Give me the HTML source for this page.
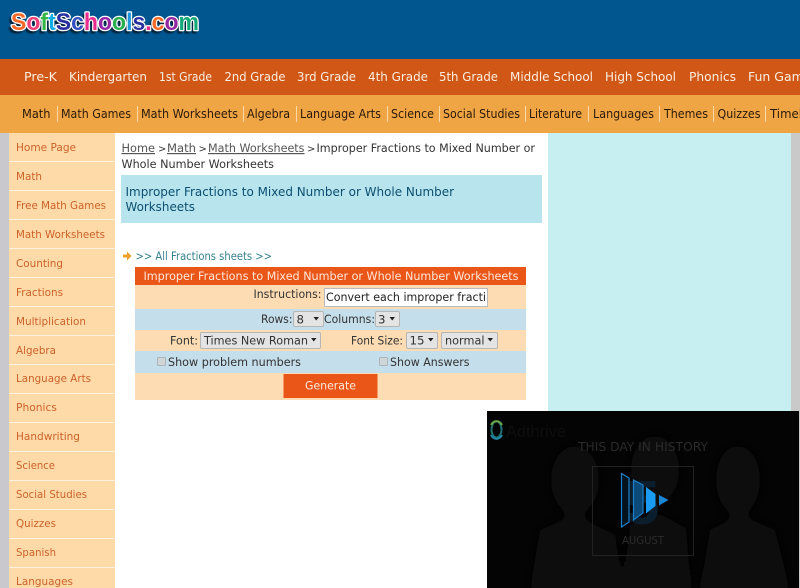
<!DOCTYPE html>
<html><head><meta charset="utf-8"><style>
html,body{margin:0;padding:0;width:800px;height:588px;overflow:hidden;background:#fff}
svg{display:block;font-family:"DejaVu Sans","Liberation Sans",sans-serif}
</style></head><body>
<svg width="800" height="588" viewBox="0 0 800 588" xmlns="http://www.w3.org/2000/svg">
<defs>
<filter id="s" x="-10%" y="-30%" width="120%" height="160%"><feGaussianBlur stdDeviation="0.8"/></filter>
<filter id="h" x="-10%" y="-30%" width="120%" height="160%"><feGaussianBlur stdDeviation="0.35"/></filter>
<filter id="p" x="-30%" y="-30%" width="160%" height="160%"><feGaussianBlur stdDeviation="7"/></filter>
</defs>
<rect width="800" height="59" fill="#01568f"/>
<rect y="59" width="800" height="36" fill="#d05716"/>
<rect y="95" width="800" height="38" fill="#f0a545"/>
<rect y="133" width="9" height="455" fill="#c9c9cd"/>
<rect x="9" y="133" width="106" height="455" fill="#fedaa9"/>
<rect x="548" y="133" width="243" height="455" fill="#c7eff1"/>
<rect x="791" y="133" width="9" height="455" fill="#c9c9c9"/>

<!-- logo -->
<g font-family="Liberation Sans" font-size="24" font-weight="bold">
<text x="9" y="32.500" textLength="188" lengthAdjust="spacingAndGlyphs" fill="#04233a" stroke="#04233a" stroke-width="2" filter="url(#s)">SoftSchools.com</text>
<text x="11" y="30" textLength="188" lengthAdjust="spacingAndGlyphs" fill="#fff" stroke="#fff" stroke-width="2.600" stroke-linejoin="round" filter="url(#h)">SoftSchools.com</text>
<text x="11" y="30" textLength="188" lengthAdjust="spacingAndGlyphs"><tspan fill="#f5692a">S</tspan><tspan fill="#ec3f7c">o</tspan><tspan fill="#36b548">f</tspan><tspan fill="#14aee6">t</tspan><tspan fill="#2b30a0">S</tspan><tspan fill="#3450c0">c</tspan><tspan fill="#ea2c8e">h</tspan><tspan fill="#9426a6">o</tspan><tspan fill="#28b04e">o</tspan><tspan fill="#1f96dc">l</tspan><tspan fill="#2b30a0">s</tspan><tspan fill="#ea2c8e">.</tspan><tspan fill="#f46a26">c</tspan><tspan fill="#9426a0">o</tspan><tspan fill="#16a878">m</tspan></text>
</g>

<!-- nav 1 -->
<g fill="#fbeee0" font-size="12.500">
<text x="24" y="81" textLength="33" lengthAdjust="spacingAndGlyphs">Pre-K</text>
<text x="69" y="81" textLength="78" lengthAdjust="spacingAndGlyphs">Kindergarten</text>
<text x="159" y="81" textLength="53" lengthAdjust="spacingAndGlyphs">1st Grade</text>
<text x="224.500" y="81" textLength="61" lengthAdjust="spacingAndGlyphs">2nd Grade</text>
<text x="297" y="81" textLength="59" lengthAdjust="spacingAndGlyphs">3rd Grade</text>
<text x="368" y="81" textLength="60" lengthAdjust="spacingAndGlyphs">4th Grade</text>
<text x="439" y="81" textLength="59" lengthAdjust="spacingAndGlyphs">5th Grade</text>
<text x="510" y="81" textLength="83" lengthAdjust="spacingAndGlyphs">Middle School</text>
<text x="605" y="81" textLength="71" lengthAdjust="spacingAndGlyphs">High School</text>
<text x="689" y="81" textLength="47" lengthAdjust="spacingAndGlyphs">Phonics</text>
<text x="748" y="81" textLength="70" lengthAdjust="spacingAndGlyphs">Fun Games</text>
</g>

<!-- nav 2 -->
<g fill="#2a1a08" font-size="12">
<text x="22" y="118" textLength="28.500" lengthAdjust="spacingAndGlyphs">Math</text>
<text x="61" y="118" textLength="70" lengthAdjust="spacingAndGlyphs">Math Games</text>
<text x="141" y="118" textLength="97" lengthAdjust="spacingAndGlyphs">Math Worksheets</text>
<text x="247" y="118" textLength="43" lengthAdjust="spacingAndGlyphs">Algebra</text>
<text x="300" y="118" textLength="81" lengthAdjust="spacingAndGlyphs">Language Arts</text>
<text x="391" y="118" textLength="43" lengthAdjust="spacingAndGlyphs">Science</text>
<text x="443" y="118" textLength="77" lengthAdjust="spacingAndGlyphs">Social Studies</text>
<text x="529" y="118" textLength="53" lengthAdjust="spacingAndGlyphs">Literature</text>
<text x="593" y="118" textLength="61" lengthAdjust="spacingAndGlyphs">Languages</text>
<text x="664" y="118" textLength="44" lengthAdjust="spacingAndGlyphs">Themes</text>
<text x="717.500" y="118" textLength="43" lengthAdjust="spacingAndGlyphs">Quizzes</text>
<text x="770" y="118" textLength="56" lengthAdjust="spacingAndGlyphs">Timelines</text>
</g>
<g fill="#f9d9a8">
<rect x="57" y="106" width="1" height="16"/><rect x="137" y="106" width="1" height="16"/><rect x="243" y="106" width="1" height="16"/><rect x="296" y="106" width="1" height="16"/><rect x="387" y="106" width="1" height="16"/><rect x="439" y="106" width="1" height="16"/><rect x="525" y="106" width="1" height="16"/><rect x="588" y="106" width="1" height="16"/><rect x="659" y="106" width="1" height="16"/><rect x="713" y="106" width="1" height="16"/><rect x="765" y="106" width="1" height="16"/>
</g>

<!-- sidebar -->
<g fill="#fff3e0">
<rect x="9" y="161" width="106" height="1"/><rect x="9" y="190" width="106" height="1"/><rect x="9" y="219" width="106" height="1"/><rect x="9" y="248" width="106" height="1"/><rect x="9" y="277" width="106" height="1"/><rect x="9" y="306" width="106" height="1"/><rect x="9" y="335" width="106" height="1"/><rect x="9" y="364" width="106" height="1"/><rect x="9" y="393" width="106" height="1"/><rect x="9" y="422" width="106" height="1"/><rect x="9" y="451" width="106" height="1"/><rect x="9" y="480" width="106" height="1"/><rect x="9" y="509" width="106" height="1"/><rect x="9" y="538" width="106" height="1"/><rect x="9" y="567" width="106" height="1"/>
</g>
<g fill="#cc6128" font-size="10.800">
<text x="16" y="151" textLength="60" lengthAdjust="spacingAndGlyphs">Home Page</text>
<text x="16" y="180" textLength="26" lengthAdjust="spacingAndGlyphs">Math</text>
<text x="16" y="209" textLength="90" lengthAdjust="spacingAndGlyphs">Free Math Games</text>
<text x="16" y="238" textLength="89" lengthAdjust="spacingAndGlyphs">Math Worksheets</text>
<text x="16" y="267" textLength="47" lengthAdjust="spacingAndGlyphs">Counting</text>
<text x="16" y="296" textLength="47" lengthAdjust="spacingAndGlyphs">Fractions</text>
<text x="16" y="325" textLength="70" lengthAdjust="spacingAndGlyphs">Multiplication</text>
<text x="16" y="354" textLength="40" lengthAdjust="spacingAndGlyphs">Algebra</text>
<text x="16" y="382" textLength="75" lengthAdjust="spacingAndGlyphs">Language Arts</text>
<text x="16" y="411" textLength="41" lengthAdjust="spacingAndGlyphs">Phonics</text>
<text x="16" y="440" textLength="64" lengthAdjust="spacingAndGlyphs">Handwriting</text>
<text x="16" y="469" textLength="39" lengthAdjust="spacingAndGlyphs">Science</text>
<text x="16" y="498" textLength="71" lengthAdjust="spacingAndGlyphs">Social Studies</text>
<text x="16" y="527" textLength="40" lengthAdjust="spacingAndGlyphs">Quizzes</text>
<text x="16" y="556" textLength="40" lengthAdjust="spacingAndGlyphs">Spanish</text>
<text x="16" y="585" textLength="57" lengthAdjust="spacingAndGlyphs">Languages</text>
</g>

<!-- breadcrumb -->
<g font-size="11.800" fill="#333">
<text x="121.500" y="152" textLength="33.500" lengthAdjust="spacingAndGlyphs" fill="#555" text-decoration="underline">Home</text>
<text x="158" y="152" font-size="10">&gt;</text>
<text x="167" y="152" textLength="29" lengthAdjust="spacingAndGlyphs" fill="#555" text-decoration="underline">Math</text>
<text x="198.500" y="152" font-size="10">&gt;</text>
<text x="208" y="152" textLength="96.500" lengthAdjust="spacingAndGlyphs" fill="#555" text-decoration="underline">Math Worksheets</text>
<text x="307" y="152" font-size="10">&gt;</text>
<text x="316.500" y="152" textLength="218.500" lengthAdjust="spacingAndGlyphs">Improper Fractions to Mixed Number or</text>
<text x="121.500" y="168" textLength="152.500" lengthAdjust="spacingAndGlyphs">Whole Number Worksheets</text>
</g>

<!-- heading -->
<rect x="121" y="175" width="421" height="48" fill="#b8e4ee"/>
<g font-size="12.800" fill="#0c4f70">
<text x="125.500" y="196" textLength="328.500" lengthAdjust="spacingAndGlyphs">Improper Fractions to Mixed Number or Whole Number</text>
<text x="125.500" y="211" textLength="69.500" lengthAdjust="spacingAndGlyphs">Worksheets</text>
</g>

<!-- link -->
<path d="M123 254.500h4v-3l4.500 4.500-4.500 4.500v-3h-4z" fill="#eea02c"/>
<text x="135.500" y="260" textLength="136.500" lengthAdjust="spacingAndGlyphs" font-size="11.800" fill="#34808f">&gt;&gt; All Fractions sheets &gt;&gt;</text>

<!-- form -->
<rect x="135" y="267" width="391" height="18" fill="#ea5518"/>
<rect x="135" y="285" width="391" height="24" fill="#fddcb3"/>
<rect x="135" y="309" width="391" height="21" fill="#c5deeb"/>
<rect x="135" y="330" width="391" height="21" fill="#fddcb3"/>
<rect x="135" y="351" width="391" height="22" fill="#c5deeb"/>
<rect x="135" y="373" width="391" height="27" fill="#fddcb3"/>
<text x="143.500" y="280" textLength="375" lengthAdjust="spacingAndGlyphs" font-size="11.800" fill="#fde8d8">Improper Fractions to Mixed Number or Whole Number Worksheets</text>

<g font-size="11.800" fill="#333">
<text x="253.500" y="298" textLength="68" lengthAdjust="spacingAndGlyphs">Instructions:</text>
<text x="261" y="323" textLength="31.500" lengthAdjust="spacingAndGlyphs">Rows:</text>
<text x="324" y="323" textLength="51" lengthAdjust="spacingAndGlyphs">Columns:</text>
<text x="170" y="344.500" textLength="28" lengthAdjust="spacingAndGlyphs">Font:</text>
<text x="351" y="344.500" textLength="52" lengthAdjust="spacingAndGlyphs">Font Size:</text>
<text x="168" y="366" textLength="133" lengthAdjust="spacingAndGlyphs">Show problem numbers</text>
<text x="390" y="366" textLength="79.500" lengthAdjust="spacingAndGlyphs">Show Answers</text>
</g>

<!-- input -->
<rect x="324.500" y="288.500" width="163" height="18" fill="#fff" stroke="#bbb"/>
<text x="326" y="301" textLength="160" lengthAdjust="spacingAndGlyphs" font-size="11.800" fill="#222">Convert each improper fracti</text>

<!-- selects -->
<g fill="#e4e4e4" stroke="#b5b5b5">
<rect x="293.500" y="311.500" width="30" height="15" rx="1.500"/>
<rect x="375.500" y="311.500" width="24" height="15" rx="1.500"/>
<rect x="200.500" y="332.500" width="120" height="16" rx="1.500"/>
<rect x="406.500" y="332.500" width="31" height="16" rx="1.500"/>
<rect x="441.500" y="332.500" width="56" height="16" rx="1.500"/>
</g>
<g font-size="11.800" fill="#333">
<text x="296.500" y="323.500">8</text>
<text x="378" y="323.500">3</text>
<text x="204" y="344.500" textLength="104" lengthAdjust="spacingAndGlyphs">Times New Roman</text>
<text x="409.500" y="344.500" textLength="15" lengthAdjust="spacingAndGlyphs">15</text>
<text x="445" y="344.500" textLength="39.500" lengthAdjust="spacingAndGlyphs">normal</text>
</g>
<g fill="#222">
<path d="M313.500 317h5.500l-2.750 3.500z"/><path d="M389.500 317h5.500l-2.750 3.500z"/><path d="M311 338h5.500l-2.750 3.500z"/><path d="M428 338h5.500l-2.750 3.500z"/><path d="M487.500 338h5.500l-2.750 3.500z"/>
</g>

<!-- checkboxes -->
<rect x="157.500" y="357.500" width="8" height="8" rx="1" fill="#cfd6da" stroke="#aeb4b8"/>
<rect x="379.500" y="357.500" width="8" height="8" rx="1" fill="#cfd6da" stroke="#aeb4b8"/>

<!-- button -->
<rect x="283.500" y="374" width="94" height="24" fill="#ea5518"/>
<text x="305" y="389.500" textLength="51" lengthAdjust="spacingAndGlyphs" font-size="11.800" fill="#fde8d8">Generate</text>

<!-- video ad -->
<rect x="487" y="411" width="312" height="177" fill="#040404"/>
<clipPath id="vc"><rect x="487" y="411" width="312" height="177"/></clipPath>
<g clip-path="url(#vc)">
<g filter="url(#p)" fill="#0a0a0a">
<ellipse cx="575" cy="480" rx="24" ry="34"/><path d="M530 590l10-60 35-15 40 20 5 55z"/>
<ellipse cx="655" cy="470" rx="24" ry="34"/><path d="M625 590l5-65 28-12 28 15 5 62z"/>
<ellipse cx="738" cy="480" rx="22" ry="34"/><path d="M700 590l10-60 30-15 35 15 15 60z"/>
</g>
<ellipse cx="496.500" cy="429.500" rx="5" ry="8" fill="none" stroke="#1f6e70" stroke-width="2"/>
<path d="M491 425a7 10 0 0 1 11 0" fill="none" stroke="#6aa648" stroke-width="2"/>
<path d="M491 435a7 10 0 0 0 11 0" fill="none" stroke="#1f88a8" stroke-width="2"/>
<text x="506" y="437" font-family="Liberation Sans" font-size="17" fill="#0e0e0e" textLength="60" lengthAdjust="spacingAndGlyphs">Adthrive</text>
<text x="578" y="451" font-size="12" fill="#2a2a2a" textLength="130" lengthAdjust="spacingAndGlyphs">THIS DAY IN HISTORY</text>
<rect x="592.500" y="466.500" width="101" height="89" fill="none" stroke="#222"/>
<text x="622" y="544" font-size="10.500" fill="#2c2c2c" textLength="42" lengthAdjust="spacingAndGlyphs">AUGUST</text>
<text x="625" y="524" font-family="Liberation Sans" font-weight="bold" font-size="62" fill="#0a1e2e">5</text>
<path d="M621.500 473.500l7.500 4.500v44l-7.500 5z" fill="#04121e" stroke="#1c7fc8" stroke-width="1.200"/>
<path d="M633.500 480l9.500 5v28l-9.500 7z" fill="#0c4a7a" stroke="#1c7fc8" stroke-width="1.200"/>
<path d="M646 487l9.500 7v12l-9.500 7.500z" fill="#1a9af0"/>
<path d="M659 495l9.500 5-9.500 5.500z" fill="#1a86d6"/>
</g>
</svg>
</body></html>
